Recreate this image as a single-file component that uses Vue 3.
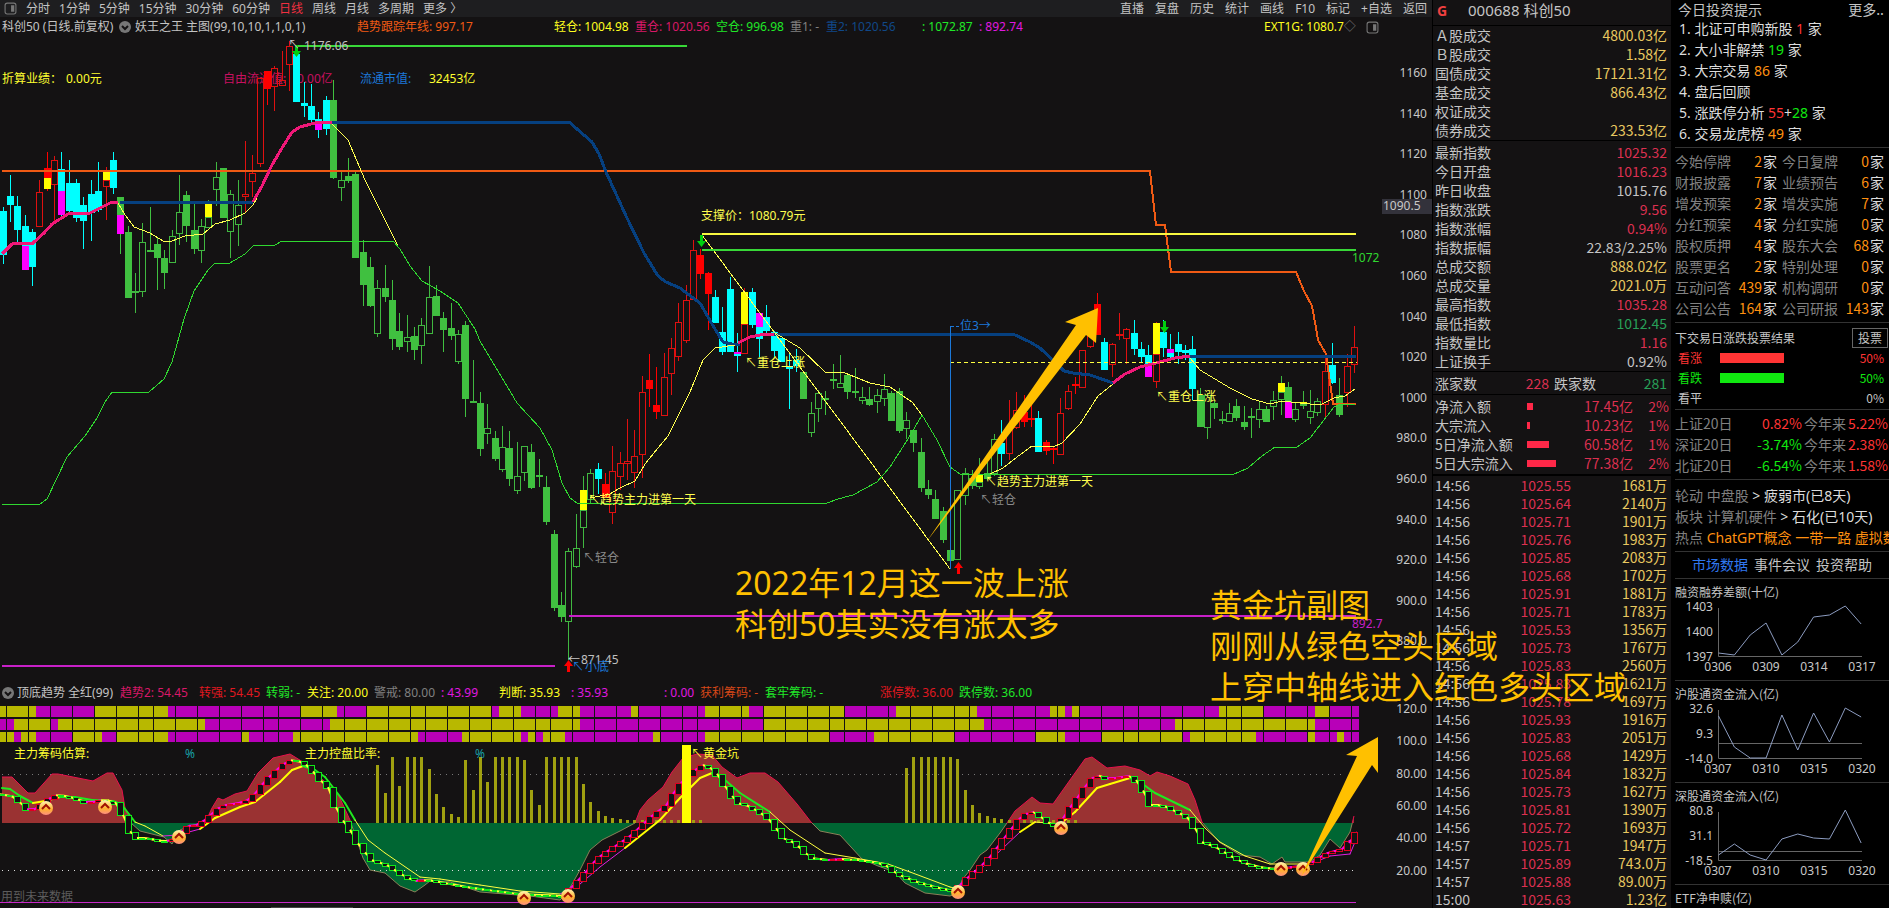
<template>
    <div class="page">
        <main class="main">
            <nav class="toolbar">
                <div class="tools">
                    <button class="tool" aria-label="panel"><svg class="panel-icon" viewBox="0 0 12 12"><rect x="1" y="1" width="10" height="10" rx="2" /><path d="M8 3v6" /></svg></button>
                    <button v-for="p in periods" :key="p" class="tool" :class="{ active: p === '日线' }">{{ p }}</button>
                </div>
                <div class="tools right">
                    <button v-for="t in tools" :key="t" class="tool">{{ t }}</button>
                </div>
            </nav>

            <div class="legend top-legend">
                <span>科创50 (日线.前复权)</span>
                <span><svg class="drop" viewBox="0 0 12 12"><circle cx="6" cy="6" r="6" /><path d="M3 5l3 3 3-3" /></svg>妖王之王 主图(99,10,10,1,1,0,1)</span>
                <span class="c-orange">趋势跟踪年线: 997.17</span>
                <span class="c-yellow">轻仓: 1004.98</span>
                <span class="c-pink">重仓: 1020.56</span>
                <span class="c-green">空仓: 996.98</span>
                <span class="c-gray">重1: -</span>
                <span class="c-navy">重2: 1020.56</span>
                <span class="c-green">: 1072.87</span>
                <span class="c-magenta">: 892.74</span>
                <span class="c-yellow ext">EXT1G: 1080.7<i>◇</i></span>
                <svg class="panel-icon" viewBox="0 0 12 12"><rect x="1" y="1" width="10" height="10" rx="2" /><path d="M8 3v6" /></svg>
            </div>

            <svg class="chart" viewBox="0 37 1432 645">
                <g class="label">
                    <text x="2" y="83" class="f-yellow">折算业绩：</text>
                    <text x="66" y="83" class="f-yellow">0.00元</text>
                    <text x="223" y="83" class="f-pink">自由流通值:</text>
                    <text x="297" y="83" class="f-pink">0.00亿</text>
                    <text x="360" y="83" class="f-blue">流通市值:</text>
                    <text x="429" y="83" class="f-yellow">32453亿</text>
                </g>
                <g shape-rendering="crispEdges">
                    <g v-for="c in candles" :key="c.x" :class="'k-' + c.type">
                        <path :d="`M${c.x + 0.5} ${c.high}V${c.top}M${c.x + 0.5} ${c.bottom}V${c.low}`" />
                        <rect :x="c.x - 2.5" :y="c.top + 0.5" width="6" :height="Math.max(c.bottom - c.top - 1, 1)" />
                    </g>
                    <rect v-for="b in blocks" :key="b[1]" :x="candleX(b[1]) - 3" :y="b[2]" width="7" :height="b[3] - b[2]" :fill="b[0]" />
                </g>
                <g class="lines">
                    <polyline v-for="(l, i) in lines" :key="i" :points="l[2]" :stroke="l[0]" :stroke-width="l[1]" />
                    <path d="M950 362.500H1357" stroke="#ffff40" stroke-dasharray="4 3" />
                    <path d="M950.500 569V326.500H954M956 326.500H959" stroke="#1c78d8" />
                </g>
                <path v-for="d in downs" :key="d[0]" :d="`M${d[0] - 1} ${d[1] - 6}h3v6h3l-4.500 6l-4.500-6h3z`" fill="#00d010" />
                <path v-for="u in ups" :key="u[0]" :d="`M${u[0] - 1} ${u[1] + 6}h3v-6h3l-4.500-6l-4.500 6h3z`" fill="#ff0000" />
                <g class="label">
                    <text v-for="t in labels" :key="t[1]" :x="t[1]" :y="t[2]" :fill="t[0]">{{ t[3] }}</text>
                    <text v-for="(v, i) in priceAxis" :key="v" x="1427" :y="Math.round(77 + i * 40.6)" class="axis">{{ v }}</text>
                    <rect x="1382" y="199" width="50" height="15" fill="#33323b" />
                    <text x="1383" y="210" class="f-text">1090.5</text>
                </g>
                <path d="M927 541L1076 325L1065 322L1098 308L1096 343L1086 335Z" fill="#ffc000" />
            </svg>

            <div class="legend sub-legend">
                <svg class="drop" viewBox="0 0 12 12"><circle cx="6" cy="6" r="6" /><path d="M3 5l3 3 3-3" /></svg>
                <span>顶底趋势 全红(99)</span>
                <span class="c-pink">趋势2: 54.45</span>
                <span class="c-red">转强: 54.45</span>
                <span class="c-green">转弱: -</span>
                <span class="c-yellow">关注: 20.00</span>
                <span class="c-gray">警戒: 80.00</span>
                <span class="c-magenta">: 43.99</span>
                <span class="c-yellow">判断: 35.93</span>
                <span class="c-magenta">: 35.93</span>
                <span class="c-magenta">: 0.00</span>
                <span class="c-brick">获利筹码: -</span>
                <span class="c-green">套牢筹码: -</span>
                <span class="c-red">涨停数: 36.00</span>
                <span class="c-green">跌停数: 36.00</span>
            </div>

            <svg class="chart" viewBox="0 704 1432 204">
                <defs>
                    <clipPath id="above"><rect x="0" y="704" width="1432" height="119" /></clipPath>
                    <clipPath id="below"><rect x="0" y="823" width="1432" height="85" /></clipPath>
                    <linearGradient id="coin" x1="0" y1="0" x2="0" y2="1">
                        <stop offset="0" stop-color="#fff6b0" />
                        <stop offset=".6" stop-color="#ffb030" />
                        <stop offset="1" stop-color="#ff9080" />
                    </linearGradient>
                </defs>
                <g shape-rendering="crispEdges">
                    <g v-for="(s, r) in strips" :key="r">
                        <rect x="0" :y="706 + r * 13" width="1359" :height="r === 2 ? 10 : 11" fill="#b8b800" />
                        <rect v-for="m in s" :key="m[0]" :x="m[0]" :y="706 + r * 13" :width="m[1] - m[0]" :height="r === 2 ? 10 : 11" fill="#b800b8" />
                    </g>
                    <path v-for="g in gridX" :key="g" :d="`M${g - 0.5} 705V743`" stroke="#141213" />
                    <path d="M2 774.500H1345" stroke="#777" stroke-dasharray="1 5" />
                </g>
                <path :d="area" fill="#9a3232" clip-path="url(#above)" />
                <path :d="area" fill="#006633" clip-path="url(#below)" />
                <polyline :points="outline" class="edge" stroke="#e8104c" clip-path="url(#above)" />
                <polyline :points="outline" class="edge" stroke="#8a8058" clip-path="url(#below)" />
                <g shape-rendering="crispEdges">
                    <rect v-for="b in bars" :key="b[0]" :x="candleX(b[0]) - 1" :y="b[1]" width="3" :height="823 - b[1]" fill="#a0a010" />
                    <path d="M2 870.500H1357" stroke="#ddd" stroke-dasharray="1 5" />
                    <rect x="0" y="902" width="1356" height="1" fill="#c828c8" />
                    <rect x="271" y="907" width="82" height="1" fill="#444" />
                </g>
                <path v-for="(s, i) in average" :key="i" :d="s.d" :stroke="s.color" :stroke-width="s.width" stroke-linecap="round" />
                <g v-for="b in boxes" :key="b.x">
                    <path :d="b.shade" :stroke="b.up ? '#ff00e0' : '#ffff30'" stroke-width="2" />
                    <rect :x="b.x - 2.5" :y="b.y" width="6" :height="b.h" fill="#141213" :stroke="b.up ? '#e00020' : '#10e818'" shape-rendering="crispEdges" />
                </g>
                <rect x="682" y="745" width="9" height="78" fill="#ffff00" />
                <g v-for="c in coins" :key="c[0]" class="coin">
                    <circle :cx="c[0]" :cy="c[1]" r="7" />
                    <path :d="`M${c[0] - 4} ${c[1] + 1}l4-4l4 4`" />
                </g>
                <g class="label">
                    <text x="14" y="758" class="f-yellow">主力筹码估算:</text>
                    <text x="185" y="758" fill="#18a0a8">%</text>
                    <text x="305" y="758" class="f-yellow">主力控盘比率:</text>
                    <text x="475" y="758" fill="#18a0a8">%</text>
                    <text x="691" y="758" class="f-yellow">↖</text>
                    <text x="703" y="758" class="f-yellow">黄金坑</text>
                    <text x="1" y="901" fill="#5c5c5c">用到未来数据</text>
                    <text v-for="(v, i) in subAxis" :key="v" x="1427" :y="Math.round(713 + i * 32.3)" class="axis">{{ v }}</text>
                </g>
                <path d="M1301 877L1357 756L1346 755L1378 737V773L1372 765Z" fill="#ffc000" />
            </svg>
        </main>

        <aside class="quote">
            <h1 class="quote-head"><b>G</b>000688 科创50</h1>
            <table class="pairs">
                <tbody>
                    <tr v-for="r in turnover" :key="r[0]"><th>{{ r[0] }}</th><td class="gold">{{ r[1] }}</td></tr>
                </tbody>
            </table>
            <table class="pairs index">
                <tbody>
                    <tr v-for="r in indexRows" :key="r[0]"><th>{{ r[0] }}</th><td :class="r[2]">{{ r[1] }}</td></tr>
                </tbody>
            </table>
            <div class="updown"><span>涨家数</span><span class="rise">228</span><span>跌家数</span><span class="fall">281</span></div>
            <table class="flows">
                <tbody>
                    <tr v-for="f in flows" :key="f[0]">
                        <th>{{ f[0] }}</th>
                        <td class="bar-cell"><i class="bar" :style="{ width: f[1] + 'px' }"></i></td>
                        <td class="rise">{{ f[2] }}</td>
                        <td class="rise pct">{{ f[3] }}</td>
                    </tr>
                </tbody>
            </table>
            <table class="ticks">
                <tbody>
                    <tr v-for="(t, i) in ticks" :key="i"><th>{{ t[0] }}</th><td class="rise">{{ t[1] }}</td><td class="gold">{{ t[2] }}</td></tr>
                </tbody>
            </table>
        </aside>

        <aside class="info">
            <section class="tips">
                <header><span>今日投资提示</span><a href="#">更多..</a></header>
                <ol>
                    <li>1. 北证可申购新股 <b class="red">1</b> 家</li>
                    <li>2. 大小非解禁 <b class="green">19</b> 家</li>
                    <li>3. 大宗交易 <b class="orange">86</b> 家</li>
                    <li>4. 盘后回顾</li>
                    <li>5. 涨跌停分析 <b class="red">55</b>+<b class="green">28</b> 家</li>
                    <li>6. 交易龙虎榜 <b class="orange">49</b> 家</li>
                </ol>
            </section>
            <section class="counts">
                <div v-for="c in counts" :key="c[0]" class="count"><span>{{ c[0] }}</span><em><b class="orange">{{ c[1] }}</b>家</em></div>
            </section>
            <section class="vote">
                <header><span>下交易日涨跌投票结果</span><button>投票</button></header>
                <div v-for="v in votes" :key="v[0]" class="vote-row" :class="v[2]">
                    <span>{{ v[0] }}</span><i><s :style="{ width: v[1] + '%' }"></s></i><span>{{ v[1] }}%</span>
                </div>
            </section>
            <section class="returns">
                <div v-for="r in returns" :key="r[0]" class="return">
                    <span>{{ r[0] }}</span><b :class="r[1][0] === '-' ? 'green' : 'red'">{{ r[1] }}</b><span>今年来</span><b class="red">{{ r[2] }}</b>
                </div>
            </section>
            <section class="rotate">
                <p>轮动 中盘股 <b>&gt; 疲弱市(已8天)</b></p>
                <p>板块 计算机硬件 <b>&gt; 石化(已10天)</b></p>
                <p>热点 <b class="orange">ChatGPT概念 一带一路 虚拟数字人</b></p>
            </section>
            <nav class="tabs"><button class="on">市场数据</button><button>事件会议</button><button>投资帮助</button></nav>
            <section v-for="m in minis" :key="m.title" class="mini">
                <h2>{{ m.title }}</h2>
                <svg viewBox="0 0 209 78">
                    <path d="M43.500 6V54.500H187" stroke="#666" />
                    <path v-if="m.zero" :d="`M43.500 ${m.zero}.5H187`" stroke="#666" />
                    <polyline :points="miniPoints(m.ys)" stroke="#8c9cc0" />
                    <text v-for="(l, i) in m.left" :key="l" x="38" :y="9 + i * 25" text-anchor="end">{{ l }}</text>
                    <text v-for="(l, i) in m.dates" :key="l" :x="43 + i * 48" y="69" text-anchor="middle">{{ l }}</text>
                </svg>
            </section>
            <section class="mini"><h2>ETF净申赎(亿)</h2></section>
        </aside>

        <p class="note note-a">2022年12月这一波上涨<br>科创50其实没有涨太多</p>
        <p class="note note-b">黄金坑副图<br>刚刚从绿色空头区域<br>上穿中轴线进入红色多头区域</p>
    </div>
</template>

<script setup>
const periods = ['分时', '1分钟', '5分钟', '15分钟', '30分钟', '60分钟', '日线', '周线', '月线', '多周期', '更多 〉'];
const tools = ['直播', '复盘', '历史', '统计', '画线', 'F10', '标记', '+自选', '返回'];

const candleX = i => Math.round(2.7 + i * 7.344);

// type + high,top,bottom,low  (c cyan, r/g hollow, R/G filled)
const raw = `c207,211,255,264 c175,196,205,222 c196,206,230,243 c215,226,246,270 c229,232,267,286 r180,192,227,227 R152,168,178,191
r156,160,185,222 c152,169,191,216 c160,183,211,215 c179,183,218,222 c197,205,221,249 c180,194,213,241 c162,191,210,212
r167,180,187,220 c152,160,188,194 G197,197,215,254 G226,232,298,298 g273,291,293,313 g223,242,292,297 G207,250,251,251
G238,244,258,290 G250,258,273,289 g230,236,263,263 g175,212,234,245 G191,195,226,242 G203,230,249,254 g219,226,251,263
g200,217,228,228 g162,177,190,206 G168,168,218,218 g190,194,232,258 g180,205,225,246 r141,194,197,213 r155,173,182,197
r78,78,164,167 R71,71,89,105 r66,68,87,111 r51,80,86,86 r41,46,65,91 c54,54,102,102 c82,103,106,117 c84,106,120,124
c112,119,123,138 c96,100,129,135 G80,100,178,179 g171,180,188,201 G158,176,181,183 G170,174,258,258 G240,252,285,306
G257,267,306,307 g280,288,334,337 G265,288,297,302 G280,300,339,350 G313,331,347,350 g315,337,342,352 G327,336,350,360
g318,325,346,364 g266,297,334,334 G285,296,316,316 G312,318,330,352 G303,328,336,340 g330,334,362,364 G321,325,399,417
g360,401,403,403 G392,403,449,456 g404,428,434,444 G431,438,459,461 g426,447,470,472 G431,448,479,486 g442,476,491,494
g446,446,473,481 G444,452,488,489 G459,475,477,487 G476,487,522,525 G530,534,608,611 G592,605,617,622 g548,551,622,660
g514,548,567,568 g476,510,528,548 g469,473,500,503 c463,469,479,494 R473,484,498,498 r446,471,513,524 r452,463,477,490
r419,461,464,480 r430,456,473,488 r376,392,455,478 R354,380,389,407 R367,405,412,419 r353,377,416,416 r338,348,374,395
r303,322,357,361 r285,300,341,343 r240,250,300,300 R249,255,274,279 R272,273,294,330 c290,297,323,323 c307,332,352,355
c277,289,352,352 c333,354,355,372 r288,324,354,354 c288,292,325,328 c313,327,339,357 c305,317,331,333 c331,332,351,357
c338,338,362,362 c352,366,369,409 c349,360,366,372 G372,372,399,399 g402,413,433,437 g390,393,409,422 G391,398,400,415
G364,379,381,389 g355,383,388,388 G373,375,392,399 G368,391,393,398 g387,397,401,404 G387,399,405,406 g389,395,402,413
g374,389,399,406 G391,393,421,421 G388,391,431,433 g412,420,429,439 G429,430,443,452 G438,452,488,492 G480,489,495,499
G490,499,519,519 G507,511,540,543 G550,550,561,561 g490,490,560,560 g468,473,496,505 G470,478,486,489 g458,482,487,489
G460,473,479,480 g434,439,474,476 c420,443,454,466 r400,430,454,460 r392,410,428,429 R395,412,422,427 R405,418,420,427
c411,418,452,452 R440,442,451,455 R447,448,450,464 r398,413,455,455 r385,391,409,410 R377,384,386,394 r350,350,388,388
r320,322,347,348 R293,304,335,335 c338,342,370,370 r343,344,365,377 r313,334,336,340 r328,329,339,364 c320,333,349,355
c342,349,357,363 c345,355,366,377 r322,354,382,388 c320,332,348,357 c334,353,357,361 c332,344,352,364 c345,350,353,360
c336,349,389,400 G388,395,427,427 g393,395,428,439 G400,403,408,419 g411,419,421,424 g403,413,422,422 G399,406,418,421
G406,422,427,430 G408,416,418,438 g402,409,420,428 G406,409,422,422 g391,400,407,420 g376,392,400,415 G382,387,402,418
g403,409,420,422 g391,404,406,409 g390,411,418,424 g398,401,413,416 r353,371,405,418 c343,365,383,384 G378,395,415,417
r354,366,393,407 r326,347,365,373`;

const candles = raw.split(/\s+/).map((s, i) => {
    const [high, top, bottom, low] = s.slice(1).split(',').map(Number);
    const kind = s[0];
    const type = kind === 'r' ? 'up' : kind === 'R' ? 'up-fill' : kind === 'g' ? 'down' : kind === 'G' ? 'down-fill' : 'cyan';
    return { x: candleX(i), high, top, bottom, low, type };
});

const Y = '#ffff00';
const M = '#ff00ff';
const blocks = [
    [M, 3, 246, 270], [Y, 6, 178, 189], [M, 8, 191, 215], [Y, 14, 171, 180], [M, 16, 215, 234], [Y, 28, 203, 217],
    [M, 43, 123, 130], [Y, 79, 490, 510], [M, 100, 352, 354], [Y, 101, 292, 324], [M, 103, 313, 327], [Y, 133, 475, 482],
    [M, 156, 366, 377], [Y, 157, 323, 354], [M, 159, 349, 353], [Y, 174, 383, 392], [M, 175, 402, 418], [Y, 177, 402, 404],
];

const green = '#30d830';
const thinYellow = '#ffff50';
const blue = '#064080';
const pink = '#f01878';
const lines = [
    ['#f05a14', 2, '2,171 1150,171 1156,225 1165,225 1171,272 1296,272 1304,291 1312,306 1316,328 1318,340 1326,354 1333,404 1356,404'],
    [blue, 3, '120,202 253,202'],
    [blue, 3, '332,122 569,122 592,142 599,154 606,172 627,218 644,253 658,276 666,282 680,288 700,303 712,324 723,342 732,344 740,344'],
    [blue, 3, '773,334 1013,334 1030,342 1040,348 1064,371 1073,373 1090,375 1113,383'],
    [blue, 3, '1190,356 1356,356'],
    [pink, 3, '2,254 12,244 20,243 33,243 44,233 52,224 68,214 90,213 110,203 118,202'],
    [pink, 3, '253,202 262,186 272,165 282,148 292,132 300,127 315,123 332,122'],
    [pink, 3, '738,343 750,337 765,334 774,334'],
    [pink, 3, '1113,383 1125,374 1140,367 1160,362 1175,358 1190,356'],
    [thinYellow, 1, '118,203 125,215 134,227 150,233 163,241 172,241 185,236 203,234 215,224 230,220 245,213 253,205 257,198'],
    [thinYellow, 1, '332,124 348,140 365,180 398,246'],
    [thinYellow, 1, '590,498 610,494 620,488 635,481 645,464 658,448 668,436 690,392 703,360 715,348 735,345'],
    [thinYellow, 1, '775,333 800,348 825,372 845,373 870,383 890,387 912,402 922,415'],
    [thinYellow, 1, '988,475 1003,468 1017,457 1032,446 1053,447 1062,443 1080,424 1098,396 1113,384'],
    [thinYellow, 1, '1190,358 1200,370 1230,388 1252,399 1270,404 1282,401 1310,404 1322,404 1334,398 1345,396 1355,389'],
    [thinYellow, 1, '702,235 950,569'],
    [green, 1, '2,505 40,504 47,499 67,457 85,436 97,418 105,402 112,392 149,392 164,379 172,362 184,319 194,291 208,270 215,263 230,263 245,254 253,246 275,245 282,241 393,241 400,249 410,266 422,281 440,291 458,303 475,329 480,341 517,403 540,428 552,450 562,483 570,498 577,503 827,503 838,499 853,495 877,482 890,467 908,439 922,415 937,440 950,467 960,474 980,474 1232,475 1248,468 1262,456 1275,447 1297,447 1310,438 1334,407 1340,404 1355,404'],
    ['#38d838', 2, '296,54 296,46 687,46'],
    ['#38d838', 2, '702,250 1356,250'],
    ['#f8f840', 2, '702,234 1356,234'],
    ['#c820c8', 2, '2,666 555,666'],
    ['#c820c8', 2, '569,616 1356,616'],
];
const downs = [[296, 51], [701, 241], [1164, 327]];
const ups = [[568, 666], [958, 568]];

const labels = [
    ['#c8c8c8', 288, 49, '↖'], ['#c0c0c0', 304, 50, '1176.06'], [thinYellow, 701, 220, '支撑价：1080.79元'],
    [green, 1352, 262, '1072'], ['#1c78d8', 960, 330, '位3→'],
    [thinYellow, 745, 367, '↖'], [thinYellow, 757, 367, '重仓上涨'], [thinYellow, 1156, 401, '↖'], [thinYellow, 1168, 401, '重仓上涨'],
    [thinYellow, 588, 504, '↖'], [thinYellow, 600, 504, '趋势主力进第一天'], [thinYellow, 985, 486, '↖'], [thinYellow, 997, 486, '趋势主力进第一天'],
    ['#8a8a8a', 583, 562, '↖'], ['#8a8a8a', 595, 562, '轻仓'], ['#8a8a8a', 980, 504, '↖'], ['#8a8a8a', 992, 504, '轻仓'],
    ['#c8c8c8', 568, 664, '←'], ['#c0c0c0', 581, 664, '871.45'], ['#1c78d8', 572, 671, '↖'], ['#1c78d8', 585, 671, '小底'],
    ['#c820c8', 1352, 628, '892.7'],
];
const priceAxis = ['1160', '1140', '1120', '1100', '1080', '1060', '1040', '1020', '1000', '980.0', '960.0', '940.0', '920.0', '900.0', '880.0'];
const subAxis = ['120.0', '100.0', '80.00', '60.00', '40.00', '20.00'];

const strips = [
    [[36, 95], [168, 300], [337, 367], [491, 499], [521, 558], [580, 631], [638, 705], [749, 764], [845, 896], [977, 1050], [1065, 1072], [1079, 1219], [1263, 1315], [1329, 1359]],
    [[0, 14], [51, 58], [205, 330], [580, 763], [984, 1175], [1315, 1359]],
    [[14, 21], [36, 72], [102, 116], [168, 241], [249, 293], [418, 462], [521, 528], [536, 543], [565, 653], [660, 705], [829, 874], [954, 1036], [1065, 1101], [1182, 1190], [1256, 1307], [1315, 1337], [1344, 1359]],
];
const gridX = [7, 29, 51, 73, 95, 117, 139, 154, 176, 198, 220, 242, 264, 279, 301, 323, 345, 367, 389, 411, 426, 448, 470,
    492, 514, 536, 551, 573, 595, 617, 639, 661, 683, 698, 720, 742, 764, 786, 808, 830, 845, 867, 889, 911, 933, 955,
    970, 992, 1014, 1036, 1058, 1080, 1102, 1124, 1139, 1161, 1183, 1205, 1227, 1242, 1264, 1286, 1308, 1330, 1352];

const outline = '2,777 12,777 18,783 28,793 35,793 52,774 58,774 78,778 93,781 107,773 113,773 122,790 125,808 131,823 140,831 164,837 172,844 180,830 190,826 205,823 212,808 218,798 223,800 235,794 247,791 258,773 273,758 290,754 303,762 325,782 338,794 350,820 355,835 363,858 370,870 385,873 400,886 415,892 425,885 430,881 450,882 480,892 530,896 560,900 567,893 580,870 590,850 602,840 620,831 635,823 640,810 648,800 663,787 672,772 683,758 697,754 712,755 722,767 737,778 750,773 765,773 778,782 797,804 811,822 820,831 840,835 862,859 878,866 895,872 905,883 925,893 950,896 958,893 962,880 970,870 980,855 987,850 1000,833 1007,823 1015,811 1032,797 1040,803 1053,804 1070,780 1085,759 1092,757 1107,768 1125,766 1140,770 1150,776 1157,772 1170,776 1188,784 1195,800 1202,822 1219,842 1240,855 1260,857 1272,864 1282,857 1285,862 1310,862 1320,855 1330,839 1340,848 1350,832 1354,816';
const area = `M2 823L${outline}L1354 823Z`;

const toPoints = s => s.split(' ').map(p => p.split(',').map(Number));

const series = toPoints('0,794 17,797 25,808 33,811 45,803 55,795 68,796 90,803 103,800 115,801 122,808 127,825 135,838 148,838 165,842 178,838 187,826 200,825 215,812 222,806 245,802 253,798 260,788 275,772 290,760 304,762 312,769 320,779 330,788 336,805 342,818 350,828 358,842 364,850 372,860 388,865 400,873 415,881 430,880 445,883 480,889 520,894 565,896 575,884 583,877 592,865 600,857 615,847 630,837 643,825 655,814 668,805 672,797 680,785 693,772 704,765 715,769 722,780 730,792 738,803 747,805 757,810 768,817 775,825 783,838 795,842 805,852 813,858 828,860 845,859 860,860 885,864 898,874 915,881 935,887 955,891 958,888 966,880 980,868 992,856 1002,842 1010,832 1020,819 1030,812 1037,812 1043,818 1055,827 1061,823 1068,812 1075,802 1083,792 1090,780 1098,775 1110,779 1130,776 1137,780 1145,792 1150,805 1163,805 1180,813 1190,818 1196,828 1202,842 1215,846 1230,855 1245,863 1265,868 1280,869 1300,866 1315,862 1325,854 1340,850 1348,848 1352,838 1358,832');

function valueAt(x) {
    const i = series.findIndex(p => p[0] >= x);
    if (i <= 0) return series[i === 0 ? 0 : series.length - 1][1];
    const [x0, y0] = series[i - 1];
    const [x1, y1] = series[i];
    return y0 + (y1 - y0) * (x - x0) / (x1 - x0);
}

const boxes = candles.map(({ x }) => {
    const a = valueAt(x - 4);
    const b = valueAt(x + 4);
    const y = Math.round(Math.min(a, b)) + 0.5;
    return { x, y, h: Math.max(Math.round(Math.abs(b - a)), 1), up: b < a, shade: `M${x - 5} ${a}L${x + 3} ${b}` };
});

const averagePoints = toPoints('2,788 10,789 20,796 33,803 45,801 60,797 75,797 92,800 113,801 122,805 135,822 145,826 163,836 178,835 200,829 215,818 240,807 255,802 280,782 292,770 303,766 315,770 325,777 335,790 345,803 355,820 368,840 385,853 420,877 440,879 480,885 520,891 560,894 580,884 600,867 625,848 660,820 680,798 700,778 712,773 725,780 740,793 770,812 790,830 825,853 855,858 888,864 910,872 950,887 958,889 985,865 1020,832 1035,822 1060,824 1075,812 1097,788 1110,784 1130,778 1140,782 1155,793 1190,810 1205,828 1220,842 1245,856 1270,864 1310,864 1330,856 1350,854 1355,842');
const average = averagePoints.slice(1).map(([x, y], i) => {
    const [px, py] = averagePoints[i];
    const rising = y < py;
    const high = y < 824;
    return {
        d: `M${px} ${py}L${x} ${y}`,
        width: high ? 2 : 1,
        color: high ? (rising ? '#ffff00' : '#20e820') : (rising ? '#e020e0' : '#ffff40'),
    };
});

const barRuns = [
    [51, [765, 793, 757, 786, 757, 757, 757, 769, 794, 807, 814, 817, 760, 790, 757, 782, 757, 757, 757, 757, 760, 790, 805, 757, 757, 757, 757, 757, 784, 802, 811, 816, 818, 819, 820, 820, 820, 820, 820, 820, 820, 820, 820, 820, 820]],
    [123, [768, 757, 757, 757, 757, 757, 757, 759, 790, 805, 813, 816, 818, 819, 820, 820, 820, 820, 820, 820, 820, 820, 820, 820]],
];
const bars = barRuns.flatMap(([start, tops]) => tops.map((t, i) => [start + i, t]));
const coins = [[46, 808], [105, 807], [179, 837], [524, 898], [568, 896], [958, 892], [1061, 828], [1281, 869], [1303, 869]];

const turnover = [['Ａ股成交', '4800.03亿'], ['Ｂ股成交', '1.58亿'], ['国债成交', '17121.31亿'], ['基金成交', '866.43亿'], ['权证成交', ''], ['债券成交', '233.53亿']];
const indexRows = [
    ['最新指数', '1025.32', 'rise'], ['今日开盘', '1016.23', 'rise'], ['昨日收盘', '1015.76', ''], ['指数涨跌', '9.56', 'rise'],
    ['指数涨幅', '0.94%', 'rise'], ['指数振幅', '22.83/2.25%', ''], ['总成交额', '888.02亿', 'gold'], ['总成交量', '2021.0万', 'gold'],
    ['最高指数', '1035.28', 'rise'], ['最低指数', '1012.45', 'fall'], ['指数量比', '1.16', 'rise'], ['上证换手', '0.92%', ''],
];
const flows = [['净流入额', 6, '17.45亿', '2%'], ['大宗流入', 3, '10.23亿', '1%'], ['5日净流入额', 22, '60.58亿', '1%'], ['5日大宗流入', 29, '77.38亿', '2%']];
const ticks = `14:56 1025.55 1681万|14:56 1025.64 2140万|14:56 1025.71 1901万|14:56 1025.76 1983万|14:56 1025.85 2083万|14:56 1025.68 1702万
|14:56 1025.91 1881万|14:56 1025.71 1783万|14:56 1025.53 1356万|14:56 1025.73 1767万|14:56 1025.83 2560万|14:56 1025.83 1621万
|14:56 1025.78 1697万|14:56 1025.93 1916万|14:56 1025.83 2051万|14:56 1025.68 1429万|14:56 1025.84 1832万|14:56 1025.73 1627万
|14:56 1025.81 1390万|14:56 1025.72 1693万|14:57 1025.71 1947万|14:57 1025.89 743.0万|14:57 1025.88 89.00万|15:00 1025.63 1.23亿`
    .split('|').map(r => r.trim().split(' '));

const counts = [
    ['今始停牌', 2], ['今日复牌', 0], ['财报披露', 7], ['业绩预告', 6], ['增发预案', 2], ['增发实施', 7], ['分红预案', 4], ['分红实施', 0],
    ['股权质押', 4], ['股东大会', 68], ['股票更名', 2], ['特别处理', 0], ['互动问答', 439], ['机构调研', 0], ['公司公告', 164], ['公司研报', 143],
];
const votes = [['看涨', 50, 'red'], ['看跌', 50, 'green'], ['看平', 0, '']];
const returns = [['上证20日', '0.82%', '5.22%'], ['深证20日', '-3.74%', '2.38%'], ['北证20日', '-6.54%', '1.58%']];
const minis = [
    { title: '融资融券差额(十亿)', left: ['1403', '1400', '1397'], dates: ['0306', '0309', '0314', '0317'], ys: [51, 53, 33, 21, 53, 40, 15, 13, 4, 22] },
    { title: '沪股通资金流入(亿)', left: ['32.6', '9.3', '-14.0'], dates: ['0307', '0310', '0315', '0320'], ys: [12, 43, 54, 54, 11, 46, 9, 38, 4, 13], zero: 39 },
    { title: '深股通资金流入(亿)', left: ['80.8', '31.1', '-18.5'], dates: ['0307', '0310', '0315', '0320'], ys: [49, 38, 49, 54, 33, 28, 32, 33, 4, 37], zero: 45 },
];
const miniPoints = ys => ys.map((y, i) => `${43.5 + i * 15.85},${y}`).join(' ');
</script>

<style>
body {
    margin: 0;
    background: #000;
}
</style>

<style scoped>
.page {
    position: relative;
    display: flex;
    height: 100vh;
    overflow: hidden;
    background: #141213;
    color: #c4c4c4;
    font: 12px/18px "Noto Sans", "Noto Sans CJK SC", sans-serif;
}

button {
    padding: 0;
    border: 0;
    background: none;
    color: inherit;
    font: inherit;
    white-space: nowrap;
}

.main {
    flex: 1;
    min-width: 0;
}

.toolbar {
    display: flex;
    justify-content: space-between;
    height: 17px;
    padding: 0 5px 0 4px;
    background: #1e1e20;
    overflow: hidden;
}

.tools {
    display: flex;
    align-items: center;
    gap: 9px;
}

.tools.right {
    gap: 11px;
}

.tool {
    display: flex;
    line-height: 17px;
}

.tool.active {
    color: #f03040;
}

.panel-icon {
    width: 13px;
    height: 13px;
    fill: none;
    stroke: #777;
}

.panel-icon path {
    stroke-width: 3;
}

.legend {
    display: grid;
    align-items: center;
    height: 20px;
    white-space: nowrap;
}

.legend > * {
    min-width: 0;
}

.top-legend {
    grid-template-columns: 117px 238px 197px 81px 81px 74px 36px 96px 57px 1fr 102px 66px;
    padding-left: 2px;
}

.top-legend > .ext {
    grid-column: 11;
}

.ext i {
    color: #777;
    font-style: normal;
}

.sub-legend {
    grid-template-columns: 15px 103px 79px 67px 41px 67px 67px 58px 72px 93px 36px 65px 115px 79px 1fr;
    height: 22px;
    padding-left: 2px;
}

.drop {
    width: 12px;
    height: 12px;
    fill: #777;
    vertical-align: -2px;
    margin-right: 4px;
}

.drop path {
    fill: none;
    stroke: #141213;
    stroke-width: 2;
}

.c-orange { color: #f05a14; }
.c-yellow { color: #ffff20; }
.c-pink { color: #d81868; }
.c-green { color: #20e828; }
.c-gray { color: #808080; }
.c-navy { color: #104888; }
.c-magenta { color: #e018e0; }
.c-red { color: #e01820; }
.c-brick { color: #d84818; }

.chart {
    display: block;
    width: 100%;
    height: auto;
    overflow: visible;
}

.label {
    font-size: 12px;
}

.axis {
    fill: #c8c8c8;
    text-anchor: end;
}

.f-text { fill: #c8c8c8; }
.f-yellow { fill: #ffff30; }
.f-pink { fill: #c81060; }
.f-blue { fill: #1c78d8; }

.lines {
    fill: none;
    shape-rendering: crispEdges;
}

.edge {
    fill: none;
}

.k-up { stroke: #e01010; fill: none; }
.k-up-fill { stroke: #ff0000; fill: #ff0000; }
.k-down { stroke: #40b840; fill: none; }
.k-down-fill { stroke: #40c040; fill: #40c040; }
.k-cyan { stroke: #00ffff; fill: #00ffff; }

.coin circle {
    fill: url(#coin);
}

.coin path {
    fill: none;
    stroke: #a01000;
    stroke-width: 2;
}

.quote {
    width: 239px;
    flex: none;
    box-sizing: border-box;
    border-left: 1px solid #000;
    font: 14px/19px "Noto Sans CJK SC", sans-serif;
}

.quote-head {
    height: 25px;
    margin: 0;
    padding-left: 4px;
    border-bottom: 1px solid #000;
    font: 15px/20px "Noto Sans", "Noto Sans CJK SC", sans-serif;
}

.quote-head b {
    display: inline-block;
    width: 31px;
    color: #f04040;
    font-size: 14px;
}

table {
    width: 100%;
    border-collapse: separate;
    border-spacing: 0;
}

th,
td {
    height: 19px;
    padding: 0;
    font-weight: normal;
    line-height: 19px;
    text-align: right;
    white-space: nowrap;
}

th {
    padding-left: 2px;
    text-align: left;
}

td:last-child {
    padding-right: 4px;
}

.pairs {
    border-bottom: 1px solid #000;
}

.pairs.index {
    margin-top: 2px;
}

.updown {
    display: grid;
    grid-template-columns: 70px 44px 80px 38px;
    height: 21px;
    margin-top: 1px;
    padding: 0 4px 0 2px;
    border-bottom: 1px solid #000;
    line-height: 21px;
}

.updown span:nth-child(3) {
    padding-left: 5px;
}

.updown .rise,
.updown .fall {
    text-align: right;
}

.flows {
    margin-top: 2px;
    padding-bottom: 1px;
    border-bottom: 2px solid #000;
}

.flows th {
    width: 92px;
}

.flows .bar-cell {
    width: 40px;
    text-align: left;
}

.flows td.pct {
    width: 36px;
    padding-right: 2px;
}

.bar {
    display: block;
    height: 7px;
    background: #ff2848;
}

.ticks th,
.ticks td {
    height: 18px;
    line-height: 18px;
}

.ticks td.rise {
    width: 60px;
}

.ticks td.gold {
    width: 96px;
}

.gold { color: #e8c860; }
.rise { color: #dc3050; }
.fall { color: #28a058; }

.info {
    width: 218px;
    flex: none;
    box-sizing: border-box;
    padding-left: 4px;
    background: #000;
    font: 14px/21px "Noto Sans CJK SC", sans-serif;
    white-space: nowrap;
    overflow: hidden;
}

.info b,
.info em {
    font-weight: normal;
    font-style: normal;
}

.info section {
    border-bottom: 1px solid #333;
    padding: 3px 5px 3px 0;
}

.info header {
    display: flex;
    justify-content: space-between;
    align-items: center;
}

.info .tips {
    padding-top: 0;
}

.tips header {
    height: 18px;
    padding-left: 3px;
    line-height: 16px;
}

.tips a {
    color: inherit;
    text-decoration: none;
}

.tips ol {
    margin: 0;
    padding: 0 0 0 4px;
    list-style: none;
    color: #dcdcdc;
    font-family: "Noto Sans", "Noto Sans CJK SC", sans-serif;
}

.counts {
    display: grid;
    grid-template-columns: 1fr 1fr;
    column-gap: 5px;
    color: #808080;
}

.count {
    display: flex;
    justify-content: space-between;
}

.count em {
    color: #dcdcdc;
}

.count b {
    margin-right: 1px;
}

.info .vote {
    padding: 4px 5px 1px 0;
    font-size: 12px;
}

.vote header {
    height: 21px;
    margin-right: -4px;
}

.vote button {
    box-sizing: border-box;
    width: 36px;
    height: 20px;
    border: 1px solid #666;
    line-height: 18px;
}

.vote-row {
    display: grid;
    grid-template-columns: 42px 128px 1fr;
    align-items: center;
    height: 20px;
    padding-left: 3px;
    line-height: 20px;
}

.vote-row span:last-child {
    text-align: right;
}

.vote-row s {
    display: block;
    height: 10px;
    background: currentColor;
}

.info .returns {
    padding-right: 1px;
}

.return {
    display: grid;
    grid-template-columns: 57px 70px 44px 1fr;
    color: #808080;
}

.return b {
    text-align: right;
}

.return span:nth-child(3) {
    padding-left: 2px;
}

.info .rotate {
    padding-top: 5px;
    padding-right: 0;
    color: #808080;
    font-family: "Noto Sans", "Noto Sans CJK SC", sans-serif;
    overflow: hidden;
}

.rotate p {
    margin: 0;
}

.rotate b:not(.orange) {
    color: #dcdcdc;
}

.tabs {
    display: flex;
    justify-content: center;
    gap: 6px;
    height: 26px;
    border-bottom: 1px solid #333;
}

.tabs button {
    height: 24px;
}

.tabs .on {
    color: #3078f0;
}

.info .mini {
    padding: 3px 5px 0 0;
}

.mini h2 {
    margin: 0;
    font: 12px/20px "Noto Sans CJK SC", sans-serif;
}

.mini svg {
    display: block;
    width: 100%;
    fill: none;
    overflow: visible;
}

.mini text {
    fill: #c8c8c8;
    font: 12px "Noto Sans", sans-serif;
}

.red { color: #ff3434; }
.green { color: #10e810; }
.orange { color: #ff9010; }

.note {
    position: absolute;
    margin: 0;
    color: #ffc000;
    font: 32px/41px "Noto Sans", "Noto Sans CJK SC", sans-serif;
    white-space: nowrap;
}

.note-a {
    left: 735px;
    top: 562px;
}

.note-b {
    left: 1210px;
    top: 584px;
}
</style>
